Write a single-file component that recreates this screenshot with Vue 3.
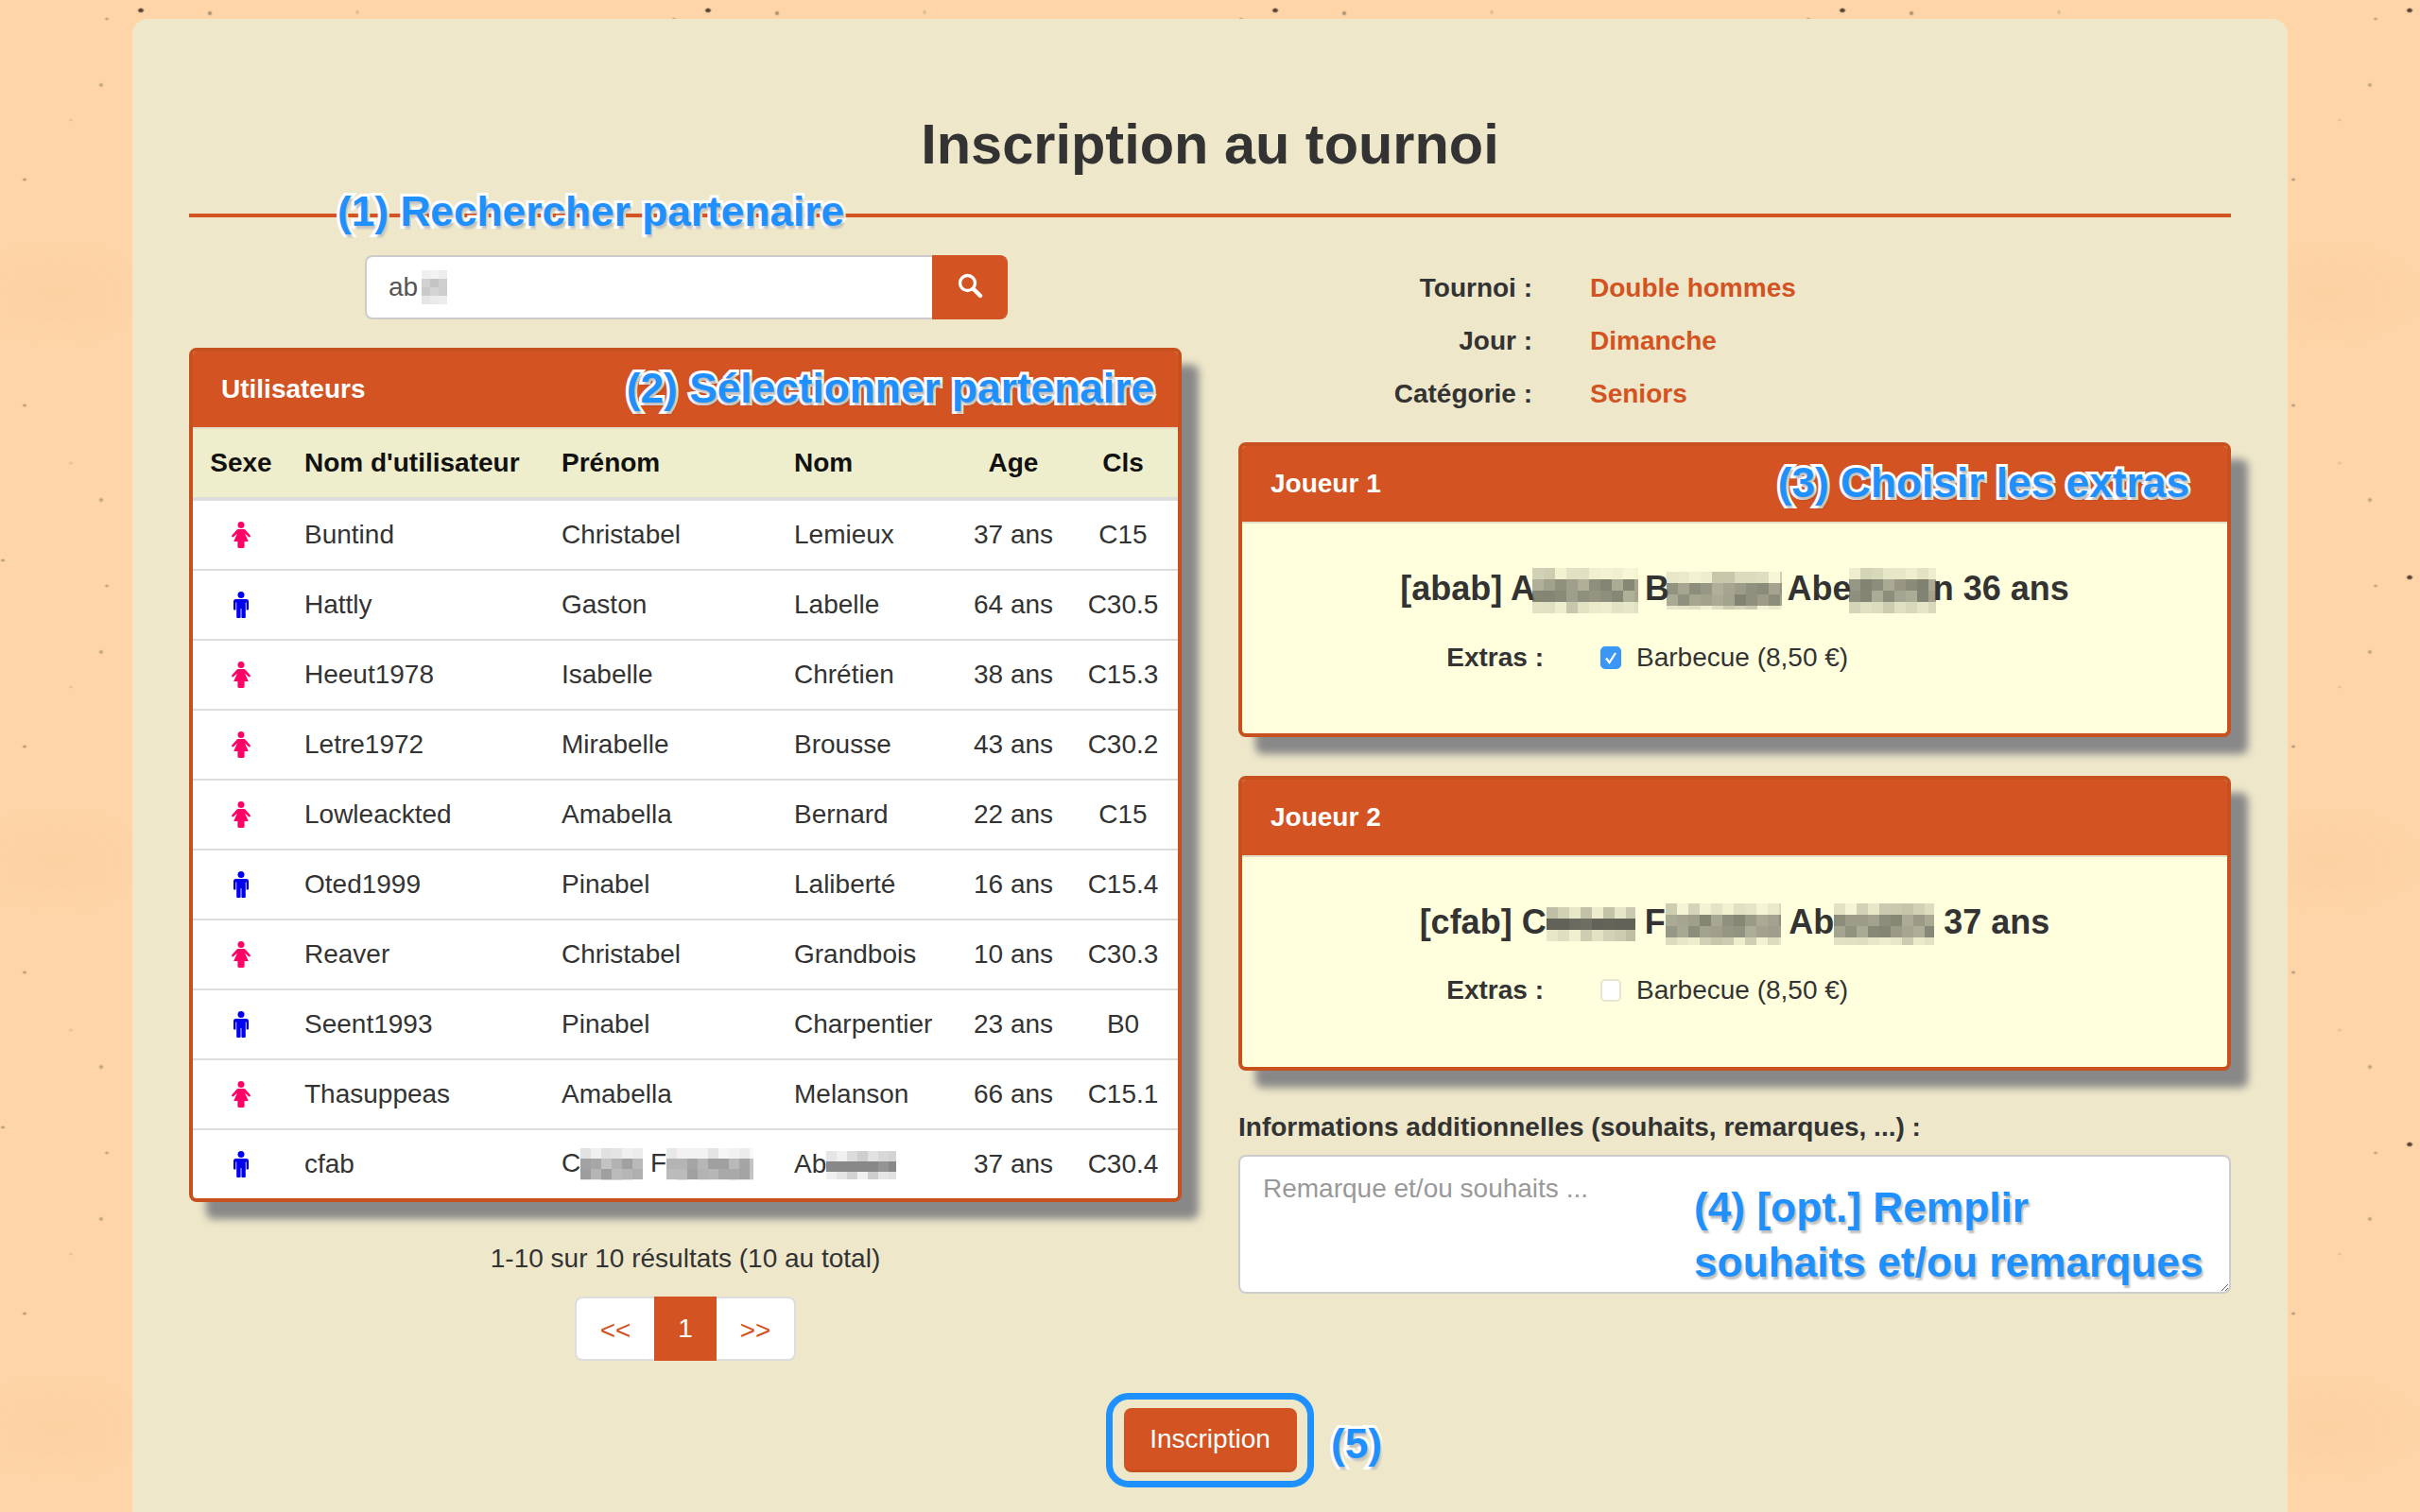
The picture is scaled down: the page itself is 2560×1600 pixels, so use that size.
<script setup>
// petit générateur de "flou pixelisé" pour les noms masqués
function pix(w, h, seed, cell = 12, rgb = '90,90,80') {
  const out = []
  let s = seed
  const cols = Math.ceil(w / cell)
  const rows = Math.ceil(h / cell)
  for (let y = 0; y < rows; y++) {
    for (let x = 0; x < cols; x++) {
      s = (s * 16807 + 11) % 2147483647
      const mid = 1 - Math.abs((y + 0.5) / rows - 0.5) * 2
      const a = Math.min(0.95, mid * mid * 0.85 + ((s % 100) / 100) * 0.3)
      out.push({ x: x * cell, y: y * cell, s: cell, fill: `rgba(${rgb},${a.toFixed(2)})` })
    }
  }
  return out
}

const users = [
  { sexe: 'f', login: 'Buntind', prenom: 'Christabel', nom: 'Lemieux', age: '37 ans', cls: 'C15' },
  { sexe: 'm', login: 'Hattly', prenom: 'Gaston', nom: 'Labelle', age: '64 ans', cls: 'C30.5' },
  { sexe: 'f', login: 'Heeut1978', prenom: 'Isabelle', nom: 'Chrétien', age: '38 ans', cls: 'C15.3' },
  { sexe: 'f', login: 'Letre1972', prenom: 'Mirabelle', nom: 'Brousse', age: '43 ans', cls: 'C30.2' },
  { sexe: 'f', login: 'Lowleackted', prenom: 'Amabella', nom: 'Bernard', age: '22 ans', cls: 'C15' },
  { sexe: 'm', login: 'Oted1999', prenom: 'Pinabel', nom: 'Laliberté', age: '16 ans', cls: 'C15.4' },
  { sexe: 'f', login: 'Reaver', prenom: 'Christabel', nom: 'Grandbois', age: '10 ans', cls: 'C30.3' },
  { sexe: 'm', login: 'Seent1993', prenom: 'Pinabel', nom: 'Charpentier', age: '23 ans', cls: 'B0' },
  { sexe: 'f', login: 'Thasuppeas', prenom: 'Amabella', nom: 'Melanson', age: '66 ans', cls: 'C15.1' },
]

const blurs = {
  search: pix(28, 36, 5, 9, '170,170,170'),
  c1: pix(66, 34, 21, 11, '130,130,130'),
  c2: pix(92, 34, 33, 11, '130,130,130'),
  c3: pix(74, 30, 47, 11, '130,130,130'),
  a1: pix(112, 48, 9),
  a2: pix(122, 40, 17),
  a3: pix(92, 48, 29),
  b1: pix(94, 36, 41),
  b2: pix(122, 44, 53),
  b3: pix(106, 44, 61),
}
</script>

<template>
  <div class="page">
    <main class="sheet">
      <h1 class="title">Inscription au tournoi</h1>
      <div class="rule">
        <span class="note note-1">(1) Rechercher partenaire</span>
      </div>

      <div class="columns">
        <section class="col">
          <div class="search">
            <input class="search-input" type="text" value="ab" />
            <svg class="pix pix-search" width="27" height="36">
              <rect v-for="(r, i) in blurs.search" :key="i" :x="r.x" :y="r.y" :width="r.s" :height="r.s" :fill="r.fill" />
            </svg>
            <button class="search-btn" type="button" aria-label="Rechercher">
              <svg width="28" height="28" viewBox="0 0 28 28" fill="none" stroke="#fff">
                <circle cx="11.5" cy="11.5" r="8" stroke-width="3.4" />
                <path d="M17.5 17.5 L25 25" stroke-width="4.4" stroke-linecap="round" />
              </svg>
            </button>
          </div>

          <div class="panel users">
            <div class="panel-head">
              <span>Utilisateurs</span>
              <span class="note note-2">(2) Sélectionner partenaire</span>
            </div>
            <table class="table">
              <colgroup>
                <col style="width: 102px" />
                <col style="width: 272px" />
                <col style="width: 246px" />
                <col style="width: 190px" />
                <col style="width: 116px" />
                <col style="width: 116px" />
              </colgroup>
              <thead>
                <tr>
                  <th class="center">Sexe</th>
                  <th>Nom d'utilisateur</th>
                  <th>Prénom</th>
                  <th>Nom</th>
                  <th class="center">Age</th>
                  <th class="center">Cls</th>
                </tr>
              </thead>
              <tbody>
                <tr v-for="u in users" :key="u.login">
                  <td class="center">
                    <svg v-if="u.sexe === 'f'" class="sex" width="20" height="28" viewBox="0 0 20 28" fill="#ff0066">
                      <circle cx="10" cy="3.5" r="3.5" />
                      <path d="M7 8 H13 Q14 8 14.8 9 L19.7 14.6 Q20.2 15.4 19.4 16.2 Q18.6 16.8 17.8 16 L14 12.4 L17.8 21 H13.6 V26.4 Q13.6 28 11.8 28 H8.2 Q6.4 28 6.4 26.4 V21 H2.2 L6 12.4 L2.2 16 Q1.4 16.8 .6 16.2 Q-.2 15.4 .3 14.6 L5.2 9 Q6 8 7 8 Z" />
                    </svg>
                    <svg v-else class="sex" width="16" height="28" viewBox="0 0 16 28" fill="#0000ee">
                      <circle cx="8" cy="3.5" r="3.5" />
                      <path d="M2.5 8 H13.5 Q16 8 16 10.5 V18.5 Q16 19.5 15 19.5 H13.6 V11.5 H12.8 V27 Q12.8 28 11.8 28 H9.2 Q8.4 28 8.4 27 V18 H7.6 V27 Q7.6 28 6.8 28 H4.2 Q3.2 28 3.2 27 V11.5 H2.4 V19.5 H1 Q0 19.5 0 18.5 V10.5 Q0 8 2.5 8 Z" />
                    </svg>
                  </td>
                  <td>{{ u.login }}</td>
                  <td>{{ u.prenom }}</td>
                  <td>{{ u.nom }}</td>
                  <td class="center">{{ u.age }}</td>
                  <td class="center">{{ u.cls }}</td>
                </tr>
                <tr>
                  <td class="center">
                    <svg class="sex" width="16" height="28" viewBox="0 0 16 28" fill="#0000ee">
                      <circle cx="8" cy="3.5" r="3.5" />
                      <path d="M2.5 8 H13.5 Q16 8 16 10.5 V18.5 Q16 19.5 15 19.5 H13.6 V11.5 H12.8 V27 Q12.8 28 11.8 28 H9.2 Q8.4 28 8.4 27 V18 H7.6 V27 Q7.6 28 6.8 28 H4.2 Q3.2 28 3.2 27 V11.5 H2.4 V19.5 H1 Q0 19.5 0 18.5 V10.5 Q0 8 2.5 8 Z" />
                    </svg>
                  </td>
                  <td>cfab</td>
                  <td>
                    C<svg class="pix" width="66" height="34"><rect v-for="(r, i) in blurs.c1" :key="i" :x="r.x" :y="r.y" :width="r.s" :height="r.s" :fill="r.fill" /></svg>
                    F<svg class="pix" width="92" height="34"><rect v-for="(r, i) in blurs.c2" :key="i" :x="r.x" :y="r.y" :width="r.s" :height="r.s" :fill="r.fill" /></svg>
                  </td>
                  <td>Ab<svg class="pix" width="74" height="30"><rect v-for="(r, i) in blurs.c3" :key="i" :x="r.x" :y="r.y" :width="r.s" :height="r.s" :fill="r.fill" /></svg></td>
                  <td class="center">37 ans</td>
                  <td class="center">C30.4</td>
                </tr>
              </tbody>
            </table>
          </div>

          <p class="results">1-10 sur 10 résultats (10 au total)</p>
          <ul class="pager">
            <li>&lt;&lt;</li>
            <li class="active">1</li>
            <li>&gt;&gt;</li>
          </ul>
        </section>

        <section class="col">
          <dl class="infos">
            <dt>Tournoi :</dt><dd>Double hommes</dd>
            <dt>Jour :</dt><dd>Dimanche</dd>
            <dt>Catégorie :</dt><dd>Seniors</dd>
          </dl>

          <div class="panel player">
            <div class="panel-head">
              <span>Joueur 1</span>
              <span class="note note-3">(3) Choisir les extras</span>
            </div>
            <div class="player-body">
              <div class="player-name">
                [abab] A<svg class="pix" width="112" height="48"><rect v-for="(r, i) in blurs.a1" :key="i" :x="r.x" :y="r.y" :width="r.s" :height="r.s" :fill="r.fill" /></svg>
                B<svg class="pix" width="122" height="40"><rect v-for="(r, i) in blurs.a2" :key="i" :x="r.x" :y="r.y" :width="r.s" :height="r.s" :fill="r.fill" /></svg>
                Abe<svg class="pix" width="92" height="48"><rect v-for="(r, i) in blurs.a3" :key="i" :x="r.x" :y="r.y" :width="r.s" :height="r.s" :fill="r.fill" /></svg>n 36 ans
              </div>
              <div class="extras">
                <b>Extras :</b>
                <span class="check on">
                  <svg width="22" height="24" viewBox="0 0 22 24" fill="none" stroke="#fff" stroke-width="2.2"><path d="M6 12.5 L9.5 17 L16 7" /></svg>
                </span>
                <span>Barbecue (8,50 €)</span>
              </div>
            </div>
          </div>

          <div class="panel player second">
            <div class="panel-head">
              <span>Joueur 2</span>
            </div>
            <div class="player-body">
              <div class="player-name">
                [cfab] C<svg class="pix" width="94" height="36"><rect v-for="(r, i) in blurs.b1" :key="i" :x="r.x" :y="r.y" :width="r.s" :height="r.s" :fill="r.fill" /></svg>
                F<svg class="pix" width="122" height="44"><rect v-for="(r, i) in blurs.b2" :key="i" :x="r.x" :y="r.y" :width="r.s" :height="r.s" :fill="r.fill" /></svg>
                Ab<svg class="pix" width="106" height="44"><rect v-for="(r, i) in blurs.b3" :key="i" :x="r.x" :y="r.y" :width="r.s" :height="r.s" :fill="r.fill" /></svg> 37 ans
              </div>
              <div class="extras">
                <b>Extras :</b>
                <span class="check"></span>
                <span>Barbecue (8,50 €)</span>
              </div>
            </div>
          </div>

          <label class="more-label">Informations additionnelles (souhaits, remarques, ...) :</label>
          <div class="more">
            <textarea class="more-input" placeholder="Remarque et/ou souhaits ..."></textarea>
            <span class="note note-4">(4) [opt.] Remplir<br />souhaits et/ou remarques</span>
          </div>
        </section>
      </div>

      <div class="submit-row">
        <div class="ring">
          <button class="submit" type="button">Inscription</button>
          <span class="note note-5">(5)</span>
        </div>
      </div>
    </main>
  </div>
</template>

<style>
html,
body {
  margin: 0;
  background: #fed5a8;
}
</style>

<style scoped>
.page {
  height: 1600px;
  overflow: hidden;
  box-sizing: border-box;
  padding: 20px 140px 0;
  font-family: "Liberation Sans", Arial, sans-serif;
  font-size: 28px;
  color: #333;
  background-color: #fed5a8;
  /* tuile de papier de 600px : points et taches */
  background-image:
    radial-gradient(ellipse 4px 3px at 149px 11px, #54432c 40%, rgba(84, 67, 44, 0)),
    radial-gradient(ellipse 3px 3px at 222px 14px, #a89070 30%, rgba(168, 144, 112, 0)),
    radial-gradient(ellipse 3px 2px at 113px 20px, #c4a883 30%, rgba(196, 168, 131, 0)),
    radial-gradient(ellipse 3px 3px at 378px 13px, #dcc09a 30%, rgba(220, 192, 154, 0)),
    radial-gradient(ellipse 3px 3px at 107px 90px, #bfa583 30%, rgba(191, 165, 131, 0)),
    radial-gradient(ellipse 3px 2px at 26px 190px, #b89e7c 30%, rgba(184, 158, 124, 0)),
    radial-gradient(ellipse 3px 2px at 26px 429px, #b89e7c 30%, rgba(184, 158, 124, 0)),
    radial-gradient(ellipse 3px 3px at 107px 529px, #bfa583 30%, rgba(191, 165, 131, 0)),
    radial-gradient(ellipse 3px 2px at 3px 593px, #b89e7c 30%, rgba(184, 158, 124, 0)),
    radial-gradient(ellipse 3px 2px at 75px 127px, #e4c39a 30%, rgba(228, 195, 154, 0)),
    radial-gradient(ellipse 3px 2px at 75px 490px, #e4c39a 30%, rgba(228, 195, 154, 0)),
    radial-gradient(ellipse 110px 60px at 60px 310px, rgba(240, 190, 130, 0.14), rgba(240, 190, 130, 0)),
    radial-gradient(ellipse 90px 50px at 300px 120px, rgba(255, 226, 190, 0.3), rgba(255, 226, 190, 0)),
    radial-gradient(ellipse 120px 60px at 480px 460px, rgba(255, 226, 190, 0.3), rgba(255, 226, 190, 0));
  background-size: 600px 600px;
}
.sheet {
  height: 1700px;
  padding: 0 60px;
  background: #eee7ca;
  border-radius: 16px;
}
.title {
  margin: 0;
  padding-top: 101px;
  font-size: 59.5px;
  line-height: 64px;
  font-weight: 700;
  text-align: center;
}
.rule {
  position: relative;
  height: 4px;
  margin-top: 41px;
  background: #d35322;
}
.note {
  color: #1e90ff;
  font-size: 44.25px;
  line-height: 58px;
  font-weight: 700;
  white-space: nowrap;
  -webkit-text-stroke: 6px #fff;
  paint-order: stroke fill;
  text-shadow: 2px 3px 2px rgba(0, 0, 0, 0.25);
}
.note-1 {
  position: absolute;
  left: 157px;
  top: -31px;
}
.note-2 {
  margin: 0 25px 2px 0;
}
.note-3 {
  margin: 0 40px 2px 0;
}
.note-4 {
  position: absolute;
  left: 482px;
  top: 27px;
}
.note-5 {
  position: absolute;
  left: 231px;
  top: 18px;
}
.columns {
  display: flex;
  gap: 60px;
  margin-top: 40px;
}
.col {
  flex: 1;
  min-width: 0;
}
.search {
  position: relative;
  display: flex;
  width: 680px;
  height: 68px;
  margin: 0 0 30px 186px;
}
.search-input {
  flex: 1;
  min-width: 0;
  box-sizing: border-box;
  padding: 0 23px;
  border: 2px solid #ccc;
  border-right: 0;
  border-radius: 8px 0 0 8px;
  background: #fff;
  font: inherit;
  color: #555;
  outline: none;
}
.search-btn {
  width: 80px;
  padding: 0;
  border: 0;
  border-radius: 0 8px 8px 0;
  background: #d35322;
}
.search-btn svg {
  display: block;
  margin: -4px auto 0;
}
.pix {
  vertical-align: middle;
}
.pix-search {
  position: absolute;
  left: 60px;
  top: 16px;
}
.panel {
  box-sizing: border-box;
  border: 4px solid #c7501f;
  border-radius: 8px;
  background: #fff;
  box-shadow: 18px 18px 8px #888;
}
.panel-head {
  display: flex;
  align-items: center;
  justify-content: space-between;
  box-sizing: border-box;
  height: 82px;
  padding: 0 0 0 30px;
  background: #d35322;
  border-bottom: 2px solid #e3dcc6;
  border-radius: 4px 4px 0 0;
  color: #fff;
  font-weight: 700;
}
.users {
  height: 904px;
}
.table {
  width: 100%;
  border-collapse: separate;
  border-spacing: 0;
  table-layout: fixed;
}
.table th {
  height: 76px;
  box-sizing: border-box;
  padding: 0 16px;
  background: #eeeecc;
  border-bottom: 4px solid #ddd;
  text-align: left;
  color: #111;
}
.table td {
  height: 74px;
  box-sizing: border-box;
  padding: 0 16px;
  white-space: nowrap;
  border-top: 2px solid #ddd;
}
.table tbody tr:first-child td {
  height: 72px;
  border-top: 0;
}
.table .center {
  padding: 0;
  text-align: center;
}
.sex {
  display: block;
  margin: 0 auto;
}
.results {
  margin: 40px 0 20px;
  line-height: 40px;
  text-align: center;
}
.pager {
  display: flex;
  justify-content: center;
  margin: 0;
  padding: 0;
  list-style: none;
}
.pager li {
  box-sizing: border-box;
  width: 84px;
  height: 68px;
  line-height: 67px;
  text-align: center;
  color: #d35322;
  background: #fff;
  border: 2px solid #ddd;
}
.pager li:first-child {
  border-right: 0;
  border-radius: 8px 0 0 8px;
}
.pager li:last-child {
  border-left: 0;
  border-radius: 0 8px 8px 0;
}
.pager .active {
  width: 66px;
  color: #fff;
  background: #d35322;
  border: 0;
}
.infos {
  display: grid;
  grid-template-columns: 311px 1fr;
  column-gap: 61px;
  margin: 7px 0 23px;
  line-height: 56px;
  font-weight: 700;
}
.infos dt {
  text-align: right;
}
.infos dd {
  margin: 0;
  color: #d35322;
}
.player {
  height: 312px;
  background: #ffffdd;
}
.player.second {
  margin-top: 41px;
}
.player-body {
  padding-top: 44px;
}
.player-name {
  line-height: 50px;
  font-size: 36px;
  font-weight: 700;
  text-align: center;
}
.player-name .pix {
  margin: 0 -3px;
}
.second .player-name .pix {
  margin: 0;
}
.extras {
  display: flex;
  align-items: center;
  margin-top: 27px;
  line-height: 40px;
}
.extras b {
  width: 319px;
  text-align: right;
}
.check {
  box-sizing: border-box;
  width: 22px;
  height: 24px;
  margin: 0 16px 0 60px;
  border: 2px solid #e6e6d0;
  border-radius: 5px;
  background: #fff;
}
.check.on {
  border: 0;
  background: #3b97f5;
}
.check svg {
  display: block;
}
.more-label {
  display: block;
  margin: 40px 0 9px;
  line-height: 40px;
  font-weight: 700;
}
.more {
  position: relative;
  height: 147px;
}
.more-input {
  display: block;
  box-sizing: border-box;
  width: 100%;
  height: 100%;
  padding: 18px 24px;
  border: 2px solid #ccc;
  border-radius: 8px;
  background: #fff;
  font: inherit;
  outline: none;
}
.more-input::placeholder {
  color: #999;
}
.submit-row {
  display: flex;
  justify-content: center;
  margin-top: 34px;
}
.ring {
  position: relative;
  display: flex;
  align-items: center;
  justify-content: center;
  box-sizing: border-box;
  width: 220px;
  height: 100px;
  border: 7px solid #1e90ff;
  border-radius: 24px;
}
.submit {
  width: 183px;
  height: 68px;
  padding: 0;
  border: 0;
  border-bottom: 3px solid #c7501f;
  border-radius: 8px;
  background: #d35322;
  color: #fff;
  font: inherit;
}
</style>
